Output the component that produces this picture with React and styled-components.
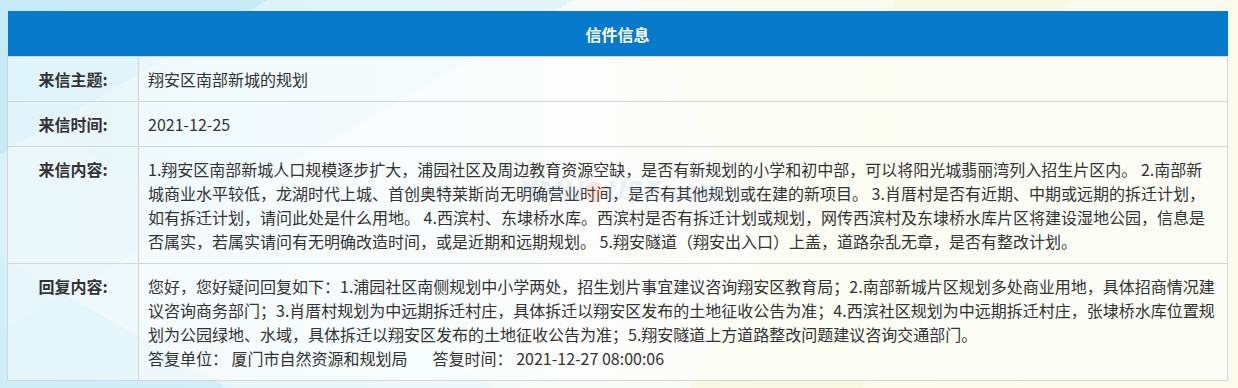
import React from 'react';
import styled, { createGlobalStyle } from 'styled-components';

const GlobalStyle = createGlobalStyle`
  html, body {
    margin: 0;
    padding: 0;
  }
  body {
    font-family: "Noto Sans CJK SC", "Microsoft YaHei", sans-serif;
    color: #333;
    background-color: #f4f9f4;
  }
`;

const letter = {
  subject: '翔安区南部新城的规划',
  date: '2021-12-25',
  content:
    '1.翔安区南部新城人口规模逐步扩大，浦园社区及周边教育资源空缺，是否有新规划的小学和初中部，可以将阳光城翡丽湾列入招生片区内。 2.南部新城商业水平较低，龙湖时代上城、首创奥特莱斯尚无明确营业时间，是否有其他规划或在建的新项目。 3.肖厝村是否有近期、中期或远期的拆迁计划，如有拆迁计划，请问此处是什么用地。 4.西滨村、东埭桥水库。西滨村是否有拆迁计划或规划，网传西滨村及东埭桥水库片区将建设湿地公园，信息是否属实，若属实请问有无明确改造时间，或是近期和远期规划。 5.翔安隧道（翔安出入口）上盖，道路杂乱无章，是否有整改计划。',
  reply:
    '您好，您好疑问回复如下：1.浦园社区南侧规划中小学两处，招生划片事宜建议咨询翔安区教育局；2.南部新城片区规划多处商业用地，具体招商情况建议咨询商务部门；3.肖厝村规划为中远期拆迁村庄，具体拆迁以翔安区发布的土地征收公告为准；4.西滨社区规划为中远期拆迁村庄，张埭桥水库位置规划为公园绿地、水域，具体拆迁以翔安区发布的土地征收公告为准；5.翔安隧道上方道路整改问题建议咨询交通部门。',
  replyUnit: '厦门市自然资源和规划局',
  replyTime: '2021-12-27 08:00:06'
};

export default function App() {
  return (
    <Page>
      <GlobalStyle />
      <InfoTable>
        <colgroup>
          <LabelCol />
          <col />
        </colgroup>
        <thead>
          <tr>
            <HeadCell colSpan={2}>信件信息</HeadCell>
          </tr>
        </thead>
        <tbody>
          <tr>
            <LabelCell>来信主题:</LabelCell>
            <ValueCell>{letter.subject}</ValueCell>
          </tr>
          <tr>
            <LabelCell>来信时间:</LabelCell>
            <ValueCell>{letter.date}</ValueCell>
          </tr>
          <tr>
            <LabelCell>来信内容:</LabelCell>
            <ValueCell>
              {letter.content}
              <Watermark>XMH<WatermarkDot />USE.com</Watermark>
            </ValueCell>
          </tr>
          <tr>
            <LabelCell>回复内容:</LabelCell>
            <ValueCell>
              {letter.reply}
              <MetaLine>
                <span>答复单位： {letter.replyUnit}</span>
                <MetaItem>答复时间： {letter.replyTime}</MetaItem>
              </MetaLine>
            </ValueCell>
          </tr>
        </tbody>
      </InfoTable>
    </Page>
  );
}

const Page = styled.div`
  box-sizing: border-box;
  width: 1238px;
  min-height: 388px;
  padding: 11px 10px 8px 7px;
  background:
    linear-gradient(118deg, rgba(255, 255, 255, 0) 0 62%, rgba(246, 248, 222, 0.7) 62% 74%, rgba(255, 255, 255, 0) 74%),
    linear-gradient(64deg, rgba(255, 255, 255, 0) 0 58%, rgba(250, 251, 236, 0.8) 58% 100%),
    linear-gradient(150deg, rgba(196, 234, 246, 0.9) 0 14%, rgba(214, 240, 248, 0.6) 14% 30%, rgba(255, 255, 255, 0) 30%),
    linear-gradient(30deg, rgba(205, 237, 247, 0.8) 0 12%, rgba(232, 246, 250, 0.6) 12% 26%, rgba(255, 255, 255, 0) 26%),
    linear-gradient(90deg, #d3eff7 0%, #eaf7fa 22%, #f7fbf8 45%, #fafbf0 70%, #f9faee 100%);
`;

const InfoTable = styled.table`
  width: 1221px;
  border-collapse: collapse;
  table-layout: fixed;
  font-size: 16px;
  line-height: 24px;
`;

const LabelCol = styled.col`
  width: 131px;
`;

const HeadCell = styled.th`
  height: 45px;
  padding: 0;
  background: #077acc;
  color: #fff;
  font-size: 16px;
  font-weight: bold;
  text-align: center;
  border-bottom: 1px solid #d6d6d6;
`;

const LabelCell = styled.td`
  padding: 10px 8px;
  vertical-align: top;
  text-align: center;
  font-weight: bold;
  color: #333;
  background: rgba(255, 255, 255, 0.45);
  border: 1px solid #d6d6d6;
`;

const ValueCell = styled.td`
  position: relative;
  padding: 10px 9px 10px 9px;
  vertical-align: top;
  color: #333;
  background: rgba(255, 255, 255, 0.6);
  border: 1px solid #d6d6d6;
`;

const MetaLine = styled.div`
  display: flex;
`;

const MetaItem = styled.span`
  margin-left: 25px;
`;

const Watermark = styled.span`
  position: absolute;
  left: 380px;
  top: 33px;
  display: flex;
  align-items: center;
  font-family: "DejaVu Sans", sans-serif;
  font-size: 26px;
  font-weight: bold;
  font-style: italic;
  letter-spacing: -1px;
  color: rgba(120, 170, 225, 0.18);
  pointer-events: none;
`;

const WatermarkDot = styled.span`
  display: inline-block;
  width: 20px;
  height: 20px;
  margin: 0 1px;
  border-radius: 50%;
  background: rgba(240, 120, 90, 0.18);
`;
